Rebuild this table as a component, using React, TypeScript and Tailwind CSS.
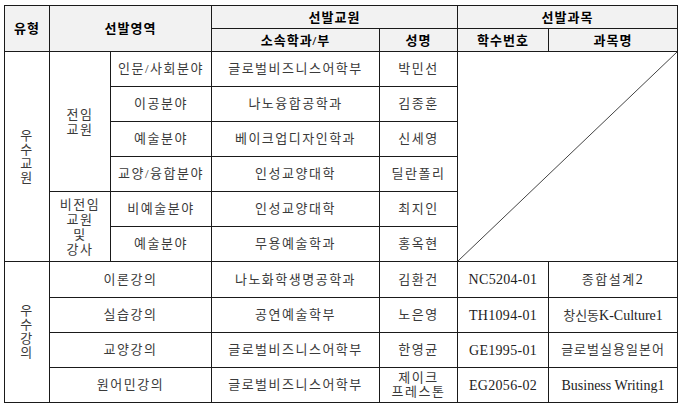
import React from "react";

const font = { fontFamily: '"Liberation Serif", "Noto Sans CJK KR", serif' };

const th = "border border-[#1a1a1a] bg-[#f2f2f2] text-center align-middle font-bold text-[13px] text-black p-0 leading-none tracking-[1px]";
const td = "border border-[#1a1a1a] text-center align-middle text-[13px] text-[#3a3a3a] p-0 tracking-[1.5px]";
const tdl = "border border-[#1a1a1a] text-center align-middle text-[14px] text-[#222] p-0 tracking-[0.3px]";

export default function App() {
  const rowsA: [string, string][] = [
    ["글로벌비즈니스어학부", "박민선"],
    ["나노융합공학과", "김종훈"],
    ["베이크업디자인학과", "신세영"],
    ["인성교양대학", "딜란폴리"],
    ["인성교양대학", "최지인"],
    ["무용예술학과", "홍옥현"],
  ];
  const areas = ["인문/사회분야", "이공분야", "예술분야", "교양/융합분야", "비예술분야", "예술분야"];
  return (
    <div className="w-[682px] h-[406px] bg-white pl-[4px] pt-[5px]" style={font}>
      <table className="table-fixed border-collapse w-[673px]">
        <colgroup>
          <col className="w-[45px]" />
          <col className="w-[61px]" />
          <col className="w-[101px]" />
          <col className="w-[168px]" />
          <col className="w-[78px]" />
          <col className="w-[91px]" />
          <col className="w-[129px]" />
        </colgroup>
        <tbody>
          <tr className="h-[23px]">
            <td rowSpan={2} className={th}>유형</td>
            <td rowSpan={2} colSpan={2} className={th}>선발영역</td>
            <td colSpan={2} className={th}>선발교원</td>
            <td colSpan={2} className={th}>선발과목</td>
          </tr>
          <tr className="h-[23px]">
            <td className={th}>소속학과/부</td>
            <td className={th}>성명</td>
            <td className={th}>학수번호</td>
            <td className={th}>과목명</td>
          </tr>
          {rowsA.map((r, i) => (
            <tr key={i} className="h-[35px]">
              {i === 0 && (
                <td rowSpan={6} className={td + " leading-[14px]"}>
                  우<br />수<br />교<br />원
                </td>
              )}
              {i === 0 && (
                <td rowSpan={4} className={td + " leading-[15px]"}>
                  전임<br />교원
                </td>
              )}
              {i === 4 && (
                <td rowSpan={2} className={td + " leading-[15px]"}>
                  비전임<br />교원<br />및<br />강사
                </td>
              )}
              <td className={td}>{areas[i]}</td>
              <td className={td}>{r[0]}</td>
              <td className={td}>{r[1]}</td>
              {i === 0 && (
                <td rowSpan={6} colSpan={2} className="border border-[#1a1a1a] p-0 relative">
                  <svg className="absolute inset-0 w-full h-full" preserveAspectRatio="none" viewBox="0 0 100 100">
                    <line x1="0" y1="100" x2="100" y2="0" stroke="#444" strokeWidth="1" vectorEffect="non-scaling-stroke" />
                  </svg>
                </td>
              )}
            </tr>
          ))}
          <tr className="h-[36px]">
            <td rowSpan={4} className={td + " leading-[14px]"}>
              우<br />수<br />강<br />의
            </td>
            <td colSpan={2} className={td}>이론강의</td>
            <td className={td}>나노화학생명공학과</td>
            <td className={td}>김환건</td>
            <td className={tdl}>NC5204-01</td>
            <td className={td}>
              종합설계<span className="text-[14px] text-[#222]">2</span>
            </td>
          </tr>
          <tr className="h-[35px]">
            <td colSpan={2} className={td}>실습강의</td>
            <td className={td}>공연예술학부</td>
            <td className={td}>노은영</td>
            <td className={tdl}>TH1094-01</td>
            <td className={td + " tracking-normal"}>
              창신동<span className="text-[14px] text-[#222]">K-Culture1</span>
            </td>
          </tr>
          <tr className="h-[35px]">
            <td colSpan={2} className={td}>교양강의</td>
            <td className={td}>글로벌비즈니스어학부</td>
            <td className={td}>한영균</td>
            <td className={tdl}>GE1995-01</td>
            <td className={td + " tracking-[1px]"}>글로벌실용일본어</td>
          </tr>
          <tr className="h-[35px]">
            <td colSpan={2} className={td}>원어민강의</td>
            <td className={td}>글로벌비즈니스어학부</td>
            <td className={td + " leading-[14px]"}>
              제이크<br />프레스톤
            </td>
            <td className={tdl}>EG2056-02</td>
            <td className={tdl + " tracking-normal text-[13.5px]"}>Business Writing1</td>
          </tr>
        </tbody>
      </table>
    </div>
  );
}
